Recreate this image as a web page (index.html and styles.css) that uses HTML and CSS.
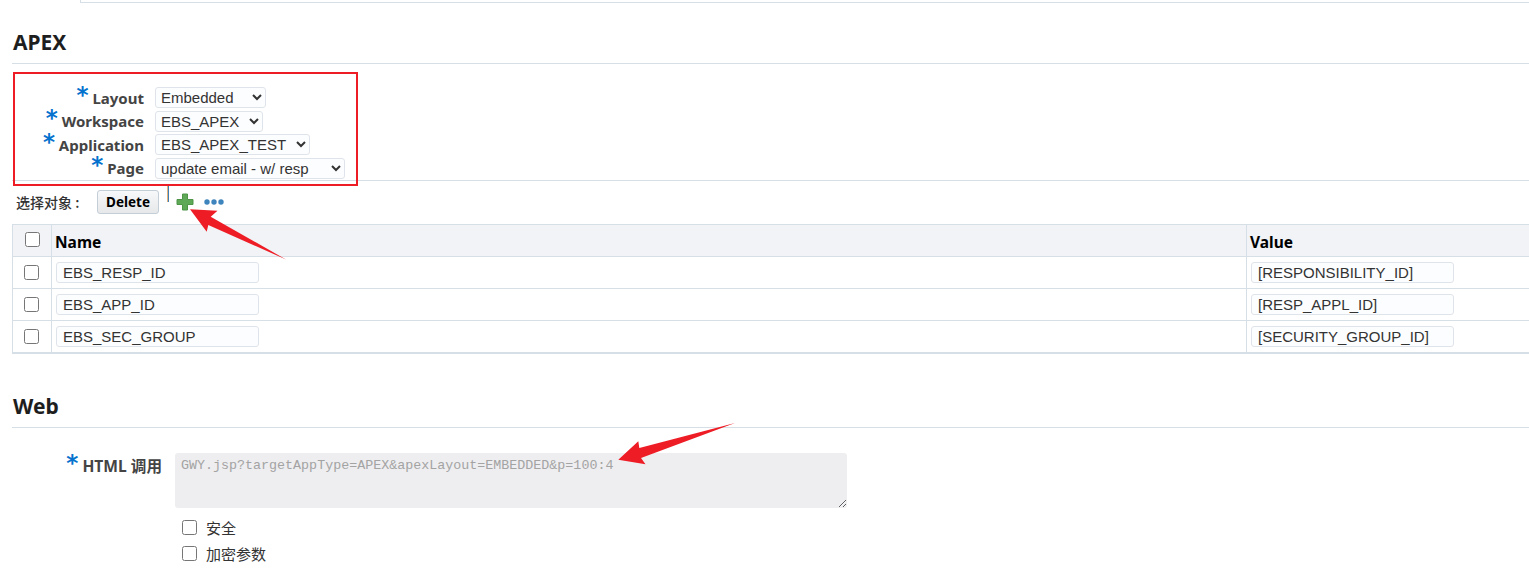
FILE: index.html
```html
<!DOCTYPE html>
<html lang="zh">
<head>
    <meta charset="UTF-8">
    <meta name="viewport" content="width=device-width, initial-scale=1.0">
    <title>APEX</title>
    <link rel="stylesheet" href="styles.css">
</head>
<body>

    <div class="top-tab"></div>

    <h2 class="section-title title-apex">APEX</h2>

    <div class="form-rows">
        <div class="form-row">
            <label class="field-label"><span class="req">*</span> Layout</label>
            <select class="sel sel-layout"><option>Embedded</option></select>
        </div>
        <div class="form-row">
            <label class="field-label"><span class="req">*</span> Workspace</label>
            <select class="sel sel-workspace"><option>EBS_APEX</option></select>
        </div>
        <div class="form-row">
            <label class="field-label"><span class="req">*</span> Application</label>
            <select class="sel sel-app"><option>EBS_APEX_TEST</option></select>
        </div>
        <div class="form-row">
            <label class="field-label"><span class="req">*</span> Page</label>
            <select class="sel sel-page"><option>update email - w/ resp</option></select>
        </div>
    </div>

    <div class="toolbar">
        <span class="toolbar-label">选择对象 :</span>
        <button class="btn" type="button">Delete</button>
        <span class="tick"></span>
        <svg class="icon-plus" width="18" height="18" viewBox="0 0 18 18">
            <path d="M6.500 1h5v5.500H17v5h-5.500V17h-5v-5.500H1v-5h5.500z" fill="#5fa857" stroke="#4d9447" stroke-width="1"/>
        </svg>
        <svg class="icon-more" width="20" height="6" viewBox="0 0 20 6">
            <circle cx="3" cy="3" r="2.700" fill="#3f85bd"/>
            <circle cx="10" cy="3" r="2.700" fill="#3f85bd"/>
            <circle cx="17" cy="3" r="2.700" fill="#3f85bd"/>
        </svg>
    </div>

    <table class="params">
        <thead>
            <tr>
                <th class="col-check"><input type="checkbox" class="chk chk-head"></th>
                <th class="col-name">Name</th>
                <th class="col-value">Value</th>
            </tr>
        </thead>
        <tbody>
            <tr>
                <td class="col-check"><input type="checkbox" class="chk"></td>
                <td><input type="text" class="txt" value="EBS_RESP_ID"></td>
                <td><input type="text" class="txt" value="[RESPONSIBILITY_ID]"></td>
            </tr>
            <tr>
                <td class="col-check"><input type="checkbox" class="chk"></td>
                <td><input type="text" class="txt" value="EBS_APP_ID"></td>
                <td><input type="text" class="txt" value="[RESP_APPL_ID]"></td>
            </tr>
            <tr>
                <td class="col-check"><input type="checkbox" class="chk"></td>
                <td><input type="text" class="txt" value="EBS_SEC_GROUP"></td>
                <td><input type="text" class="txt" value="[SECURITY_GROUP_ID]"></td>
            </tr>
        </tbody>
    </table>

    <h2 class="section-title title-web">Web</h2>

    <div class="html-row">
        <label class="field-label html-label"><span class="req">*</span> HTML 调用</label>
        <textarea class="html-call" disabled>GWY.jsp?targetAppType=APEX&amp;apexLayout=EMBEDDED&amp;p=100:4</textarea>
    </div>
    <label class="check-row"><input type="checkbox" class="chk"> 安全</label>
    <label class="check-row"><input type="checkbox" class="chk"> 加密参数</label>

    <!-- annotations drawn on top of the screenshot -->
    <svg class="marks" width="1529" height="569" viewBox="0 0 1529 569">
        <rect x="14" y="73" width="343" height="112" fill="none" stroke="#ee1c25" stroke-width="2"/>
        <polygon points="190,209.300 217.500,210.700 210.700,216.700 286,259.500 208.300,225 206.700,231.700" fill="#ee1c25"/>
        <polygon points="735,423 639.300,448 638.300,441.300 618.300,459.700 645.500,464.300 641,458" fill="#ee1c25"/>
    </svg>

</body>
</html>
```

FILE: styles.css
```css
html, body { margin: 0; padding: 0; overflow: hidden; }
body { position: relative; height: 569px; background: #fff; color: #333; font-family: "Liberation Sans", Arial, sans-serif; font-size: 15px; }

.top-tab { height: 2px; margin-left: 80px; border-left: 1px solid #d6dfe6; border-bottom: 1px solid #d6dfe6; }

.section-title { margin: 0 0 0 12px; font-family: "Noto Sans", "Open Sans", sans-serif; font-size: 21px; font-weight: 700; color: #1e1e1e; border-bottom: 1px solid #d6dfe6; }
.title-apex { padding: 25px 0 6px 1px; line-height: 29px; }
.title-web { margin-top: 38px; padding: 0 0 6px 1px; line-height: 29px; }

.form-rows { padding-top: 22px; height: 94px; }
.form-row { display: flex; align-items: center; height: 23.500px; }
.field-label { width: 144px; margin-right: 11px; text-align: right; font-family: "Noto Sans", "Noto Sans CJK SC", sans-serif; font-size: 15px; font-weight: 700; color: #444; white-space: nowrap; }
.req { position: relative; top: -1px; font-family: "DejaVu Sans", sans-serif; font-size: 23px; line-height: 14px; font-weight: 700; color: #0572ce; }

.sel { height: 21px; padding: 0 0 0 1px; border: 1px solid #dfe4ea; border-radius: 3px; background: #fcfdfe; color: #333; font-family: "Liberation Sans", Arial, sans-serif; font-size: 15px; }
.sel-layout { width: 111px; }
.sel-workspace { width: 108px; }
.sel-app { width: 155px; }
.sel-page { width: 190px; }

.toolbar { display: flex; align-items: center; box-sizing: border-box; height: 44px; padding-bottom: 2px; margin-left: 12px; border-top: 1px solid #d6dfe6; }
.toolbar-label { width: 67px; margin-left: 4px; margin-right: 14px; font-family: "Noto Sans CJK SC", sans-serif; font-size: 14px; font-weight: 500; color: #333; white-space: nowrap; }
.btn { height: 24px; width: 62px; padding: 0; border: 1px solid #c4ced7; border-radius: 3px; background: linear-gradient(#f7f8f9, #e6e8ea); color: #000; font-family: "Noto Sans", sans-serif; font-size: 13.500px; font-weight: 700; }
.tick { align-self: flex-start; box-sizing: border-box; width: 2px; height: 16px; margin: 5px 0 0 8px; background: #3f7fb5; border-left: 1px solid #e3b27c; }
.icon-plus { margin: 0 0 0 7px; }
.icon-more { margin: 0 0 0 10px; }

.params { width: 1517px; margin-left: 12px; border-collapse: collapse; table-layout: fixed; border-bottom: 2px solid #d6dfe6; border-left: 1px solid #d6dfe6; }
.params th, .params td { padding: 0; border-top: 1px solid #d6dfe6; border-left: 1px solid #d6dfe6; text-align: left; }
.params th { height: 32px; background: #f1f3f7; color: #000; font-family: "Noto Sans", sans-serif; font-size: 15.500px; font-weight: 700; padding: 3px 0 0 3px; box-sizing: border-box; }
.params td { height: 31px; padding-left: 4px; }
.params .col-check { width: 39px; padding: 0 1px 0 0; text-align: center; }
.params .col-name { width: 1195px; }
.chk { width: 15px; height: 15px; margin: 0; vertical-align: middle; }
.params .chk { position: relative; top: -1px; }
.params .chk-head { top: -3px; left: 1px; }

.txt { width: 203px; height: 21px; box-sizing: border-box; padding: 0 6px; border: 1px solid #dfe4ea; border-radius: 3px; background: #fcfdfe; color: #333; font-family: "Liberation Sans", Arial, sans-serif; font-size: 15px; }

.html-row { display: flex; align-items: flex-start; margin-top: 25px; }
.html-label { width: 162px; margin-right: 13px; margin-top: 1px; font-size: 15.600px; }
.html-call { width: 672px; height: 55px; box-sizing: border-box; padding: 5px 6px; border: 0; border-radius: 3px; background: #eeeef0; color: #a3a3a3; font-family: "Liberation Mono", monospace; font-size: 13.350px; }

.check-row { display: flex; align-items: center; gap: 9px; height: 26px; margin-left: 182px; font-family: "Noto Sans CJK SC", sans-serif; font-size: 15px; color: #333; }
.html-row + .check-row { margin-top: 6px; }

.marks { position: absolute; left: 0; top: 0; pointer-events: none; }
```
